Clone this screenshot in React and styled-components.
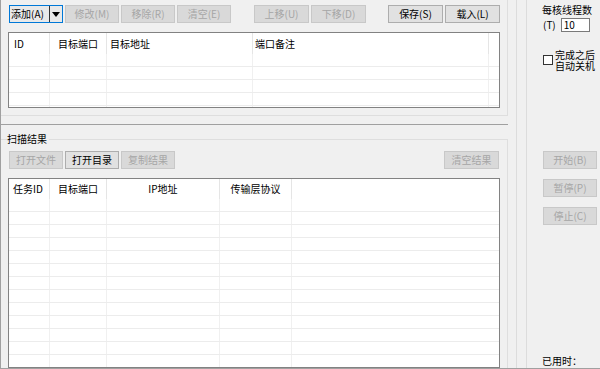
import React from 'react'
import styled, { createGlobalStyle } from 'styled-components'

const GlobalStyle = createGlobalStyle`
  html, body {
    margin: 0;
    padding: 0;
    background: #f0f0f0;
  }
  body {
    font-family: "Noto Sans CJK SC", "Noto Sans", sans-serif;
    font-size: 10px;
    line-height: 12px;
    color: #000;
  }
  * { box-sizing: border-box; }
`

const Window = styled.div`
  width: 600px;
  height: 369px;
  display: flex;
  background: #f0f0f0;
  border-left: 1px solid #a0a0a0;
  border-bottom: 1px solid #a0a0a0;
  overflow: hidden;
`

const LeftPane = styled.div`
  width: 507px;
  display: flex;
  flex-direction: column;
  flex-shrink: 0;
`

const TopPanel = styled.div`
  height: 116px;
  padding: 5px 7px 0 7px;
  border-right: 1px solid #dedede;
  border-bottom: 1px solid #dedede;
`

const Divider = styled.div`
  height: 1px;
  margin-top: 8px;
  background: #a0a0a0;
`

const Toolbar = styled.div`
  display: flex;
  height: 18px;
  margin-left: 1px;
  margin-top: ${p => p.$top || 0}px;
`

const ButtonGroup = styled.div`
  display: flex;
  gap: 2px;
  margin-left: ${p => p.$gap || 0}px;
`

const Button = styled.button`
  width: ${p => p.$w || 54}px;
  height: 18px;
  padding: 0;
  margin: 0;
  font: inherit;
  line-height: 16px;
  text-align: center;
  color: ${p => (p.disabled ? '#a6a6a6' : '#000')};
  background: ${p => (p.disabled ? '#d9d9d9' : '#e1e1e1')};
  border: 1px solid ${p => (p.disabled ? '#c8c8c8' : '#adadad')};
  border-radius: 0;
  flex-shrink: 0;
`

const SplitButton = styled.div`
  display: flex;
  width: 54px;
  height: 18px;
  border: 1px solid #0078d7;
  background: #e9e9e9;
`

const SplitLabel = styled.div`
  width: 40px;
  padding-left: 1px;
  line-height: 16px;
  border-right: 1px solid #333;
`

const SplitArrow = styled.div`
  flex: 1;
  display: flex;
  align-items: center;
  justify-content: center;
`

const TableBox = styled.div`
  width: 492px;
  height: ${p => (p.$h ? `${p.$h}px` : 'auto')};
  flex: ${p => (p.$h ? 'none' : '1')};
  margin-top: 9px;
  background: #fff;
  border: 1px solid #828282;
  overflow: hidden;
  display: flex;
  flex-direction: column;
`

const HeadRow = styled.div`
  display: flex;
  height: ${p => p.$h}px;
  flex-shrink: 0;
`

const HeadCell = styled.div`
  width: ${p => p.$w}px;
  flex-shrink: 0;
  padding-left: ${p => p.$pad || 0}px;
  text-align: ${p => p.$align};
  line-height: ${p => p.$h}px;
  border-right: 1px solid #e5e5e5;
  white-space: nowrap;
`

const Row = styled.div`
  display: flex;
  height: 13px;
  flex-shrink: 0;
  border-bottom: 1px solid #ececec;
`

const Cell = styled.div`
  width: ${p => p.$w}px;
  flex-shrink: 0;
  border-right: 1px solid #f0f0f0;
`

const ResultGroup = styled.div`
  flex: 1;
  margin-top: 14px;
  padding: 0 7px;
  border-top: 1px solid #dedede;
  border-right: 1px solid #dedede;
  display: flex;
  flex-direction: column;
  min-height: 0;
`

const GroupTitle = styled.div`
  align-self: flex-start;
  margin: -7px 0 0 -1px;
  padding-right: 2px;
  background: #f0f0f0;
`

const Spacer = styled.div`
  flex: 1;
`

const Splitter = styled.div`
  width: 11px;
  margin-left: 8px;
  flex-shrink: 0;
  border-left: 1px solid #dcdcdc;
  border-right: 1px solid #dcdcdc;
`

const RightPane = styled.div`
  flex: 1;
  display: flex;
  flex-direction: column;
  padding: 4px 0 1px 15px;
`

const ThreadRow = styled.div`
  display: flex;
  align-items: center;
  gap: 5px;
  margin: 2px 0 0 1px;
  height: 14px;
`

const NumInput = styled.div`
  width: 29px;
  height: 14px;
  padding-left: 2px;
  line-height: 12px;
  background: #fff;
  border: 1px solid #7a7a7a;
`

const CheckRow = styled.div`
  display: flex;
  align-items: center;
  gap: 2px;
  margin: 17px 0 0 1px;
`

const CheckBox = styled.div`
  width: 10px;
  height: 10px;
  background: #fff;
  border: 1px solid #333;
  flex-shrink: 0;
`

const CheckLabel = styled.div`
  width: 42px;
  line-height: 11px;
`

const SideButtons = styled.div`
  display: flex;
  flex-direction: column;
  gap: 10px;
  margin: 80px 0 0 1px;
`

const Elapsed = styled.div`
  margin-top: auto;
`

const topColumns = [
  { label: 'ID', w: 41, align: 'left', pad: 5 },
  { label: '目标端口', w: 57, align: 'center' },
  { label: '目标地址', w: 146, align: 'left', pad: 3 },
  { label: '端口备注', w: 236, align: 'left', pad: 2 },
]

const resultColumns = [
  { label: '任务ID', w: 41, align: 'left', pad: 4 },
  { label: '目标端口', w: 57, align: 'center' },
  { label: 'IP地址', w: 113, align: 'center' },
  { label: '传输层协议', w: 72, align: 'center' },
]

const ListView = ({ columns, headHeight, rows, height }) => (
  <TableBox $h={height}>
    <HeadRow $h={headHeight}>
      {columns.map(c => (
        <HeadCell key={c.label} $w={c.w} $pad={c.pad} $align={c.align} $h={headHeight}>
          {c.label}
        </HeadCell>
      ))}
    </HeadRow>
    {Array.from({ length: rows }).map((_, i) => (
      <Row key={i}>
        {columns.map(c => (
          <Cell key={c.label} $w={c.w} />
        ))}
      </Row>
    ))}
  </TableBox>
)

export default function App() {
  return (
    <>
      <GlobalStyle />
      <Window>
        <LeftPane>
          <TopPanel>
            <Toolbar>
              <ButtonGroup>
                <SplitButton>
                  <SplitLabel>添加(A)</SplitLabel>
                  <SplitArrow>
                    <svg width="8" height="5" viewBox="0 0 8 5">
                      <polygon points="0,0 8,0 4,5" fill="#000" />
                    </svg>
                  </SplitArrow>
                </SplitButton>
                <Button disabled>修改(M)</Button>
                <Button disabled>移除(R)</Button>
                <Button disabled>清空(E)</Button>
              </ButtonGroup>
              <ButtonGroup $gap={23}>
                <Button $w={55} disabled>上移(U)</Button>
                <Button $w={55} disabled>下移(D)</Button>
              </ButtonGroup>
              <ButtonGroup $gap={22}>
                <Button $w={55}>保存(S)</Button>
                <Button $w={55}>载入(L)</Button>
              </ButtonGroup>
            </Toolbar>
            <ListView columns={topColumns} headHeight={21} rows={5} height={76} />
          </TopPanel>
          <Divider />
          <ResultGroup>
            <GroupTitle>扫描结果</GroupTitle>
            <Toolbar $top={6}>
              <ButtonGroup>
                <Button disabled>打开文件</Button>
                <Button>打开目录</Button>
                <Button disabled>复制结果</Button>
              </ButtonGroup>
              <Spacer />
              <Button $w={55} disabled style={{ marginRight: 1 }}>清空结果</Button>
            </Toolbar>
            <ListView columns={resultColumns} headHeight={20} rows={14} />
          </ResultGroup>
        </LeftPane>
        <Splitter />
        <RightPane>
          <div>每核线程数</div>
          <ThreadRow>
            <span>(T)</span>
            <NumInput>10</NumInput>
          </ThreadRow>
          <CheckRow>
            <CheckBox />
            <CheckLabel>完成之后自动关机</CheckLabel>
          </CheckRow>
          <SideButtons>
            <Button disabled>开始(B)</Button>
            <Button disabled>暂停(P)</Button>
            <Button disabled>停止(C)</Button>
          </SideButtons>
          <Elapsed>已用时：</Elapsed>
        </RightPane>
      </Window>
    </>
  )
}
